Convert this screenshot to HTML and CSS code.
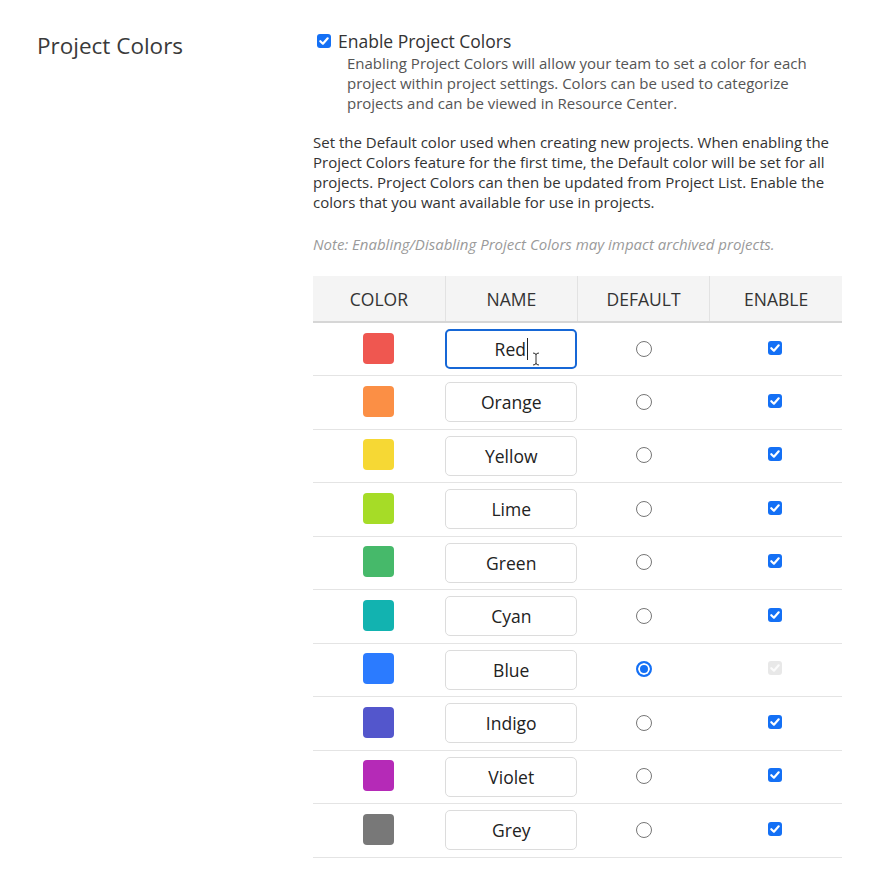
FILE: index.html
```html
<!DOCTYPE html>
<html>
<head>
<meta charset="utf-8">
<link rel="stylesheet" href="styles.css">
</head>
<body>
<div class="page">
  <div class="side">
    <h2 class="title">Project Colors</h2>
  </div>
  <div class="main">
    <label class="enable">
      <span class="cb"><svg viewBox="0 0 14 14" width="14" height="14"><path d="M3.3 7.2 L5.9 9.7 L10.7 4.3" fill="none" stroke="#fff" stroke-width="2.2" stroke-linecap="round" stroke-linejoin="round"/></svg></span>
      <span class="enable-text">Enable Project Colors</span>
    </label>
    <p class="desc">Enabling Project Colors will allow your team to set a color for each project within project settings. Colors can be used to categorize projects and can be viewed in Resource Center.</p>
    <p class="para">Set the Default color used when creating new projects. When enabling the Project Colors feature for the first time, the Default color will be set for all projects. Project Colors can then be updated from Project List. Enable the colors that you want available for use in projects.</p>
    <p class="note">Note: Enabling/Disabling Project Colors may impact archived projects.</p>

    <table class="colors">
      <thead>
        <tr><th>COLOR</th><th>NAME</th><th>DEFAULT</th><th>ENABLE</th></tr>
      </thead>
      <tbody>
        <tr>
          <td><span class="swatch" style="background:#ef5750"></span></td>
          <td><div class="name focused"><span>Red</span><span class="caret"></span><svg class="ibeam" viewBox="0 0 8 14" width="8" height="14"><path d="M1 1 Q4 1 4 3 L4 11 Q4 13 1 13 M7 1 Q4 1 4 3 M4 11 Q4 13 7 13" fill="none" stroke="#333" stroke-width="1"/></svg></div></td>
          <td><span class="radio"></span></td>
          <td><span class="cb"><svg viewBox="0 0 14 14" width="14" height="14"><path d="M3.3 7.2 L5.9 9.7 L10.7 4.3" fill="none" stroke="#fff" stroke-width="2.2" stroke-linecap="round" stroke-linejoin="round"/></svg></span></td>
        </tr>
        <tr>
          <td><span class="swatch" style="background:#fb8f45"></span></td>
          <td><div class="name">Orange</div></td>
          <td><span class="radio"></span></td>
          <td><span class="cb"><svg viewBox="0 0 14 14" width="14" height="14"><path d="M3.3 7.2 L5.9 9.7 L10.7 4.3" fill="none" stroke="#fff" stroke-width="2.2" stroke-linecap="round" stroke-linejoin="round"/></svg></span></td>
        </tr>
        <tr>
          <td><span class="swatch" style="background:#f6d834"></span></td>
          <td><div class="name">Yellow</div></td>
          <td><span class="radio"></span></td>
          <td><span class="cb"><svg viewBox="0 0 14 14" width="14" height="14"><path d="M3.3 7.2 L5.9 9.7 L10.7 4.3" fill="none" stroke="#fff" stroke-width="2.2" stroke-linecap="round" stroke-linejoin="round"/></svg></span></td>
        </tr>
        <tr>
          <td><span class="swatch" style="background:#a6dc27"></span></td>
          <td><div class="name">Lime</div></td>
          <td><span class="radio"></span></td>
          <td><span class="cb"><svg viewBox="0 0 14 14" width="14" height="14"><path d="M3.3 7.2 L5.9 9.7 L10.7 4.3" fill="none" stroke="#fff" stroke-width="2.2" stroke-linecap="round" stroke-linejoin="round"/></svg></span></td>
        </tr>
        <tr>
          <td><span class="swatch" style="background:#46b96a"></span></td>
          <td><div class="name">Green</div></td>
          <td><span class="radio"></span></td>
          <td><span class="cb"><svg viewBox="0 0 14 14" width="14" height="14"><path d="M3.3 7.2 L5.9 9.7 L10.7 4.3" fill="none" stroke="#fff" stroke-width="2.2" stroke-linecap="round" stroke-linejoin="round"/></svg></span></td>
        </tr>
        <tr>
          <td><span class="swatch" style="background:#12b3b0"></span></td>
          <td><div class="name">Cyan</div></td>
          <td><span class="radio"></span></td>
          <td><span class="cb"><svg viewBox="0 0 14 14" width="14" height="14"><path d="M3.3 7.2 L5.9 9.7 L10.7 4.3" fill="none" stroke="#fff" stroke-width="2.2" stroke-linecap="round" stroke-linejoin="round"/></svg></span></td>
        </tr>
        <tr>
          <td><span class="swatch" style="background:#2b7bff"></span></td>
          <td><div class="name">Blue</div></td>
          <td><span class="radio checked"></span></td>
          <td><span class="cb disabled"><svg viewBox="0 0 14 14" width="14" height="14"><path d="M3.3 7.2 L5.9 9.7 L10.7 4.3" fill="none" stroke="#fbfbfb" stroke-width="2.2" stroke-linecap="round" stroke-linejoin="round"/></svg></span></td>
        </tr>
        <tr>
          <td><span class="swatch" style="background:#5356cc"></span></td>
          <td><div class="name">Indigo</div></td>
          <td><span class="radio"></span></td>
          <td><span class="cb"><svg viewBox="0 0 14 14" width="14" height="14"><path d="M3.3 7.2 L5.9 9.7 L10.7 4.3" fill="none" stroke="#fff" stroke-width="2.2" stroke-linecap="round" stroke-linejoin="round"/></svg></span></td>
        </tr>
        <tr>
          <td><span class="swatch" style="background:#b52ab7"></span></td>
          <td><div class="name">Violet</div></td>
          <td><span class="radio"></span></td>
          <td><span class="cb"><svg viewBox="0 0 14 14" width="14" height="14"><path d="M3.3 7.2 L5.9 9.7 L10.7 4.3" fill="none" stroke="#fff" stroke-width="2.2" stroke-linecap="round" stroke-linejoin="round"/></svg></span></td>
        </tr>
        <tr>
          <td><span class="swatch" style="background:#787878"></span></td>
          <td><div class="name">Grey</div></td>
          <td><span class="radio"></span></td>
          <td><span class="cb"><svg viewBox="0 0 14 14" width="14" height="14"><path d="M3.3 7.2 L5.9 9.7 L10.7 4.3" fill="none" stroke="#fff" stroke-width="2.2" stroke-linecap="round" stroke-linejoin="round"/></svg></span></td>
        </tr>
      </tbody>
    </table>
  </div>
</div>
</body>
</html>
```

FILE: styles.css
```css
* { box-sizing: border-box; }
html, body { margin: 0; padding: 0; background: #fff; }
body {
  font-family: "Open Sans", "Liberation Sans", sans-serif;
  color: #333;
}
.page {
  display: flex;
  padding: 30px 0 0 37px;
}
.side { width: 276px; flex: none; }
.title {
  margin: 1px 0 0;
  font-size: 22.5px;
  font-weight: 400;
  line-height: 30px;
  color: #3a3a3a;
}
.main { width: 529px; flex: none; }
.enable {
  display: flex;
  align-items: center;
  height: 22px;
  padding-left: 4px;
}
.enable .cb { margin-right: 7px; }
.enable-text { font-size: 17.5px; color: #333; line-height: 22px; }
.desc {
  margin: 1px 0 0 34px;
  font-size: 15px;
  line-height: 20px;
  color: #555;
}
.para {
  margin: 19px 0 0;
  font-size: 15px;
  line-height: 20px;
  color: #333;
}
.note {
  margin: 22px 0 0;
  font-size: 15px;
  line-height: 20px;
  font-style: italic;
  color: #9a9a9a;
}
.colors {
  margin-top: 22px;
  width: 529px;
  border-collapse: collapse;
  table-layout: fixed;
}
.colors th {
  background: #f4f4f4;
  height: 46px;
  font-size: 17.5px;
  font-weight: 400;
  color: #333;
  text-align: center;
  border-left: 1px solid #e2e2e2;
  border-bottom: 2px solid #d6d6d6;
  padding: 0;
}
.colors th:first-child { border-left: none; }
.colors td {
  height: 53.5px;
  padding: 0;
  text-align: center;
  vertical-align: middle;
  border-bottom: 1px solid #e4e4e4;
}
.swatch {
  display: inline-block;
  width: 31px;
  height: 31px;
  border-radius: 4px;
  vertical-align: middle;
  position: relative;
  top: -1px;
  left: -1px;
}
.name {
  position: relative;
  height: 40px;
  width: 132px;
  border: 1px solid #dcdcdc;
  border-radius: 5px;
  display: flex;
  align-items: center;
  justify-content: center;
  font-size: 17.5px;
  color: #222;
  background: #fff;
}
.name.focused {
  border: 2px solid #1667d6;
}
.caret {
  display: inline-block;
  width: 1px;
  height: 22px;
  background: #222;
  margin-left: 1px;
}
.ibeam {
  position: absolute;
  left: 85px;
  top: 21px;
}
.radio {
  display: inline-block;
  width: 16px;
  height: 16px;
  border-radius: 50%;
  border: 1px solid #767676;
  vertical-align: middle;
  background: #fff;
  position: relative;
  top: -2px;
}
.radio.checked {
  border: 2px solid #1470f5;
  box-shadow: inset 0 0 0 2px #fff;
  background: #1470f5;
}
.cb {
  display: inline-flex;
  width: 14px;
  height: 14px;
  border-radius: 3px;
  background: #1470f5;
  vertical-align: middle;
  flex: none;
}
.colors .cb { position: relative; top: -3px; left: -1px; }
.cb svg { display: block; }
.cb.disabled { background: #e8e8e8; }
```
